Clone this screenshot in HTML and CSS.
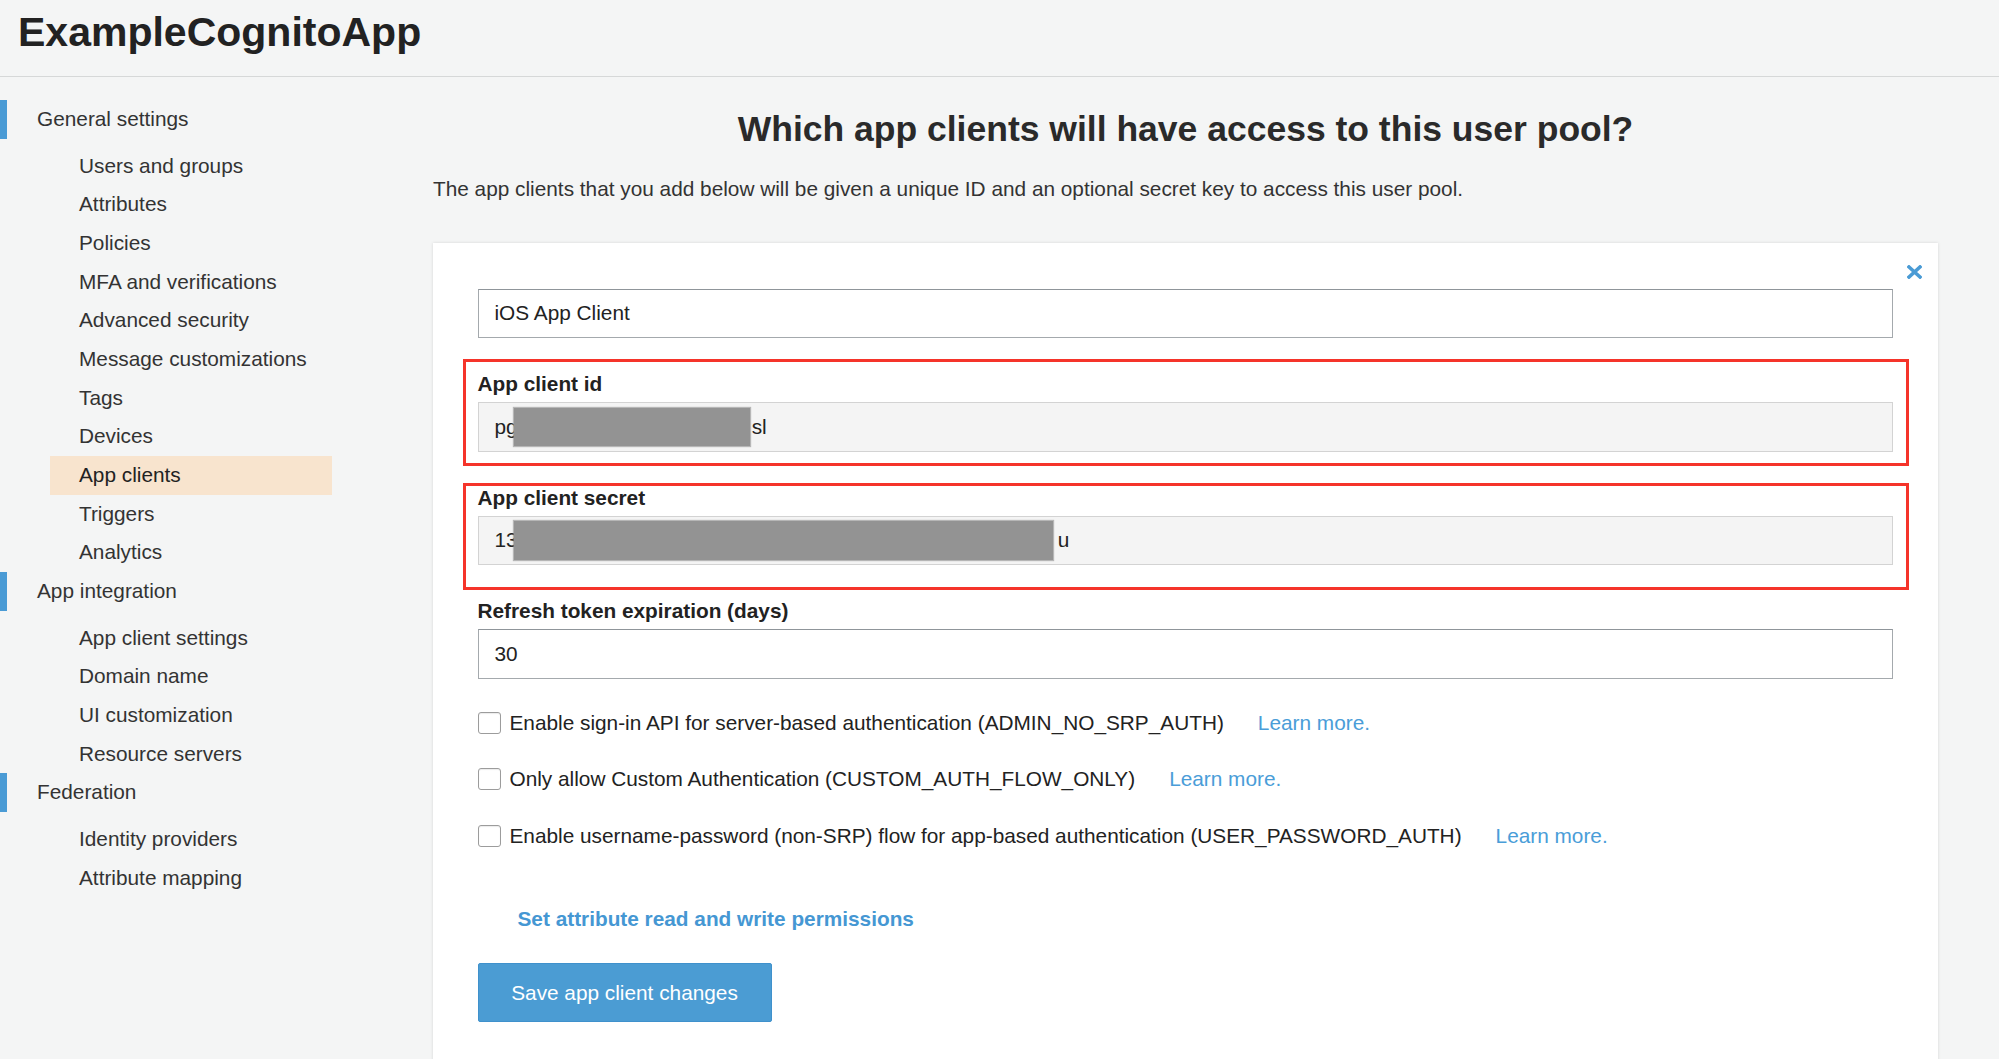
FILE: index.html
```html
<!DOCTYPE html>
<html lang="en">
<head>
<meta charset="utf-8">
<title>ExampleCognitoApp - App clients</title>
<link rel="stylesheet" href="styles.css">
</head>
<body>
<header class="topbar">
  <h1 class="app-title">ExampleCognitoApp</h1>
</header>
<div class="layout">
  <nav class="sidebar">
    <div class="nav-group">
      <div class="group-title">General settings</div>
      <ul class="sub-list">
        <li class="sub-item">Users and groups</li>
        <li class="sub-item">Attributes</li>
        <li class="sub-item">Policies</li>
        <li class="sub-item">MFA and verifications</li>
        <li class="sub-item">Advanced security</li>
        <li class="sub-item">Message customizations</li>
        <li class="sub-item">Tags</li>
        <li class="sub-item">Devices</li>
        <li class="sub-item active">App clients</li>
        <li class="sub-item">Triggers</li>
        <li class="sub-item">Analytics</li>
      </ul>
    </div>
    <div class="nav-group">
      <div class="group-title">App integration</div>
      <ul class="sub-list">
        <li class="sub-item">App client settings</li>
        <li class="sub-item">Domain name</li>
        <li class="sub-item">UI customization</li>
        <li class="sub-item">Resource servers</li>
      </ul>
    </div>
    <div class="nav-group">
      <div class="group-title">Federation</div>
      <ul class="sub-list">
        <li class="sub-item">Identity providers</li>
        <li class="sub-item">Attribute mapping</li>
      </ul>
    </div>
  </nav>
  <main class="main">
    <h2 class="page-heading">Which app clients will have access to this user pool?</h2>
    <p class="intro">The app clients that you add below will be given a unique ID and an optional secret key to access this user pool.</p>
    <section class="card">
      <span class="close-btn" aria-label="Remove">
        <svg width="15" height="14" viewBox="0 0 15 14"><path d="M2 2 L13 12 M13 2 L2 12" stroke="#4a9bd5" stroke-width="3.6" stroke-linecap="square"/></svg>
      </span>
      <div class="text-input">iOS App Client</div>

      <div class="field">
        <div class="field-label">App client id</div>
        <div class="text-input readonly">pg<span class="redact redact-id"></span><span class="after-id">sl</span></div>
      </div>

      <div class="field">
        <div class="field-label">App client secret</div>
        <div class="text-input readonly">13<span class="redact redact-secret"></span><span class="after-secret">u</span></div>
      </div>

      <div class="field">
        <div class="field-label">Refresh token expiration (days)</div>
        <div class="text-input">30</div>
      </div>

      <div class="checks">
        <div class="check-row"><span class="checkbox"></span><span class="check-label">Enable sign-in API for server-based authentication (ADMIN_NO_SRP_AUTH)</span><a class="learn">Learn more.</a></div>
        <div class="check-row"><span class="checkbox"></span><span class="check-label">Only allow Custom Authentication (CUSTOM_AUTH_FLOW_ONLY)</span><a class="learn">Learn more.</a></div>
        <div class="check-row"><span class="checkbox"></span><span class="check-label">Enable username-password (non-SRP) flow for app-based authentication (USER_PASSWORD_AUTH)</span><a class="learn">Learn more.</a></div>
      </div>

      <a class="perm-link">Set attribute read and write permissions</a>

      <div class="actions"><span class="save-btn">Save app client changes</span></div>

      <div class="annot annot-id"></div>
      <div class="annot annot-secret"></div>
    </section>
  </main>
</div>
</body>
</html>
```
FILE: styles.css
```css
html, body {
  margin: 0;
  padding: 0;
}
body {
  background: #f4f5f5;
  font-family: "Liberation Sans", Arial, Helvetica, sans-serif;
  font-size: 20.8px;
  color: #333;
  overflow: hidden;
  height: 1059px;
}

.topbar {
  height: 77px;
  box-sizing: border-box;
  padding: 7px 0 0 18px;
  border-bottom: 1px solid #d6d8d8;
}
.app-title {
  margin: 0;
  font-size: 41px;
  font-weight: bold;
  color: #222;
  line-height: 50px;
}

.layout {
  display: flex;
}

.sidebar {
  width: 433px;
  flex: 0 0 433px;
  padding-top: 23px;
}
.group-title {
  height: 38.5px;
  line-height: 38.5px;
  border-left: 7px solid #4a9bd5;
  padding-left: 30px;
  color: #333;
}
.sub-list {
  list-style: none;
  margin: 8px 0 0 0;
  padding: 0;
}
.sub-item {
  height: 38.7px;
  line-height: 38.7px;
  margin-left: 50px;
  width: 281.5px;
  box-sizing: border-box;
  padding-left: 29px;
  color: #333;
  white-space: nowrap;
}
.sub-item.active {
  background: #f8e4ce;
  color: #222;
}

.main {
  flex: 1;
  padding-right: 61px;
  min-width: 0;
}
.page-heading {
  margin: 30px 0 0 0;
  text-align: center;
  font-size: 35.5px;
  line-height: 44px;
  font-weight: bold;
  color: #2a2a2a;
}
.intro {
  margin: 24.5px 0 0 0;
  line-height: 26px;
  color: #333;
  white-space: nowrap;
}

.card {
  position: relative;
  margin-top: 41px;
  background: #fff;
  box-shadow: 0 0 3px rgba(0, 0, 0, 0.13);
  padding: 46px 45px 80px 44.5px;
}
.close-btn {
  position: absolute;
  top: 22px;
  right: 16px;
  width: 15px;
  height: 14px;
  display: block;
}
.close-btn svg {
  display: block;
}

.text-input {
  height: 49.5px;
  box-sizing: border-box;
  border: 1px solid #a4a9ad;
  border-top-color: #8f959a;
  background: #fff;
  padding-left: 16px;
  display: flex;
  align-items: center;
  color: #222;
  white-space: nowrap;
}
.text-input.readonly {
  background: #f4f4f4;
  border: 1px solid #d3d3d3;
}

.field {
  margin-top: 34px;
}
.field-label {
  height: 24px;
  line-height: 24px;
  font-weight: bold;
  color: #222;
  margin-bottom: 6px;
}

.redact {
  display: inline-block;
  height: 38px;
  background: #939393;
  box-shadow: 0 0 1px 1px rgba(140, 140, 140, 0.6);
  margin-left: -4px;
}
.redact-id {
  width: 236px;
}
.redact-secret {
  width: 539px;
  height: 39px;
}
.after-id {
  margin-left: 2px;
}
.after-secret {
  margin-left: 5px;
}

.checks {
  margin-top: 16px;
}
.check-row {
  height: 56.5px;
  display: flex;
  align-items: center;
  white-space: nowrap;
}
.checkbox {
  width: 23px;
  height: 22px;
  box-sizing: border-box;
  border: 1px solid #9c9c9c;
  border-radius: 3px;
  background: #fff;
  box-shadow: inset 0 1px 1px rgba(0, 0, 0, 0.08);
  margin-right: 9px;
  flex: 0 0 auto;
}
.check-label {
  color: #222;
}
.learn {
  margin-left: 34px;
  color: #4a9dd8;
}

.perm-link {
  display: block;
  margin: 43px 0 0 40px;
  line-height: 24px;
  font-weight: bold;
  color: #4597d3;
}

.actions {
  margin-top: 32px;
}
.save-btn {
  display: inline-flex;
  align-items: center;
  justify-content: center;
  width: 294px;
  height: 59px;
  box-sizing: border-box;
  background: #4b9cd3;
  border: 1px solid #3f91cc;
  border-radius: 2px;
  color: #fff;
}

.annot {
  position: absolute;
  left: 29.5px;
  width: 1446px;
  height: 107px;
  box-sizing: border-box;
  border: 3px solid #f5342a;
  pointer-events: none;
}
.annot-id {
  top: 116px;
}
.annot-secret {
  top: 240px;
}
```
